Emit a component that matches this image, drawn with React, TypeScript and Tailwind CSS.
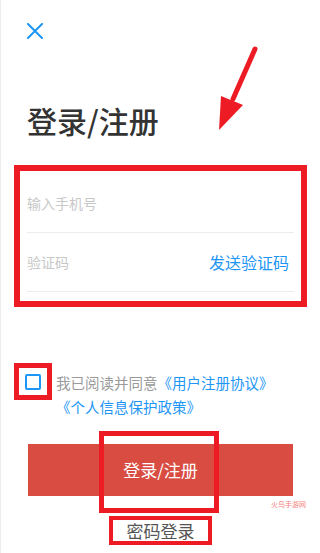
import React from "react";

export default function App() {
  return (
    <div
      className="relative w-[320px] h-[553px] overflow-hidden bg-white border-l border-[#ececec]"
      style={{ fontFamily: '"Noto Sans CJK SC", "Noto Sans", sans-serif' }}
    >
      {/* close */}
      <div className="pt-[23px] pl-[26px]">
        <svg className="block" width="16" height="16" viewBox="0 0 16 16">
          <path d="M1 1 L15 15 M15 1 L1 15" stroke="#1e96f5" strokeWidth="2" strokeLinecap="square" />
        </svg>
      </div>

      {/* title */}
      <h1 className="mt-[64px] pl-[26px] text-[30px] leading-[34px] font-medium text-[#333333]">登录/注册</h1>

      {/* form box */}
      <div className="mt-[28px] mx-[13px] border-[6px] border-[#ed1c24] px-[7px] pb-[9px]">
        <div className="h-[62px] flex items-center pt-[4px] border-b border-[#ececec]">
          <span className="text-[14px] text-[#c8c8c8]">输入手机号</span>
        </div>
        <div className="h-[59px] flex items-center justify-between border-b border-[#ececec]">
          <span className="text-[14px] text-[#c8c8c8]">验证码</span>
          <span className="text-[16px] text-[#1e96f5] pr-[5px]">发送验证码</span>
        </div>
      </div>

      {/* agreement */}
      <div className="mt-[56px] ml-[13px] flex items-start">
        <div className="w-[38px] h-[37px] border-[5px] border-[#ed1c24] flex items-center justify-center">
          <div className="w-[16px] h-[16px] border-2 border-[#1e96f5] rounded-[2px]" />
        </div>
        <div className="ml-[4px] mt-[8px] text-[14.5px] leading-[24px]">
          <div>
            <span className="text-[#9a9a9a]">我已阅读并同意</span>
            <span className="text-[#1e96f5]">《用户注册协议》</span>
          </div>
          <div className="text-[#1e96f5]">《个人信息保护政策》</div>
        </div>
      </div>

      {/* button */}
      <div className="mt-[25px] mx-[27px] h-[52px] bg-[#d84c42] flex items-center justify-center">
        <span className="text-[17px] text-white">登录/注册</span>
      </div>

      {/* password login */}
      <div className="mt-[20px] flex justify-center">
        <div className="w-[103px] h-[29px] border-[4px] border-[#ed1c24] flex items-center justify-center">
          <span className="text-[17px] leading-[20px] text-[#555555]">密码登录</span>
        </div>
      </div>

      {/* overlays */}
      <div className="absolute left-[98px] top-[431px] w-[120px] h-[82px] border-[5px] border-[#ed1c24]" />
      <div className="absolute left-[270px] top-[500px] text-[7px] leading-[9px] text-[#f47c7c]">火鸟手游网</div>
      <svg className="absolute left-0 top-0" width="320" height="200" viewBox="0 0 320 200">
        <path d="M254 49 L232 99" stroke="#ed1c24" strokeWidth="5" strokeLinecap="round" />
        <path d="M220 96 L242 105 L218 130 Z" fill="#ed1c24" />
      </svg>
    </div>
  );
}
